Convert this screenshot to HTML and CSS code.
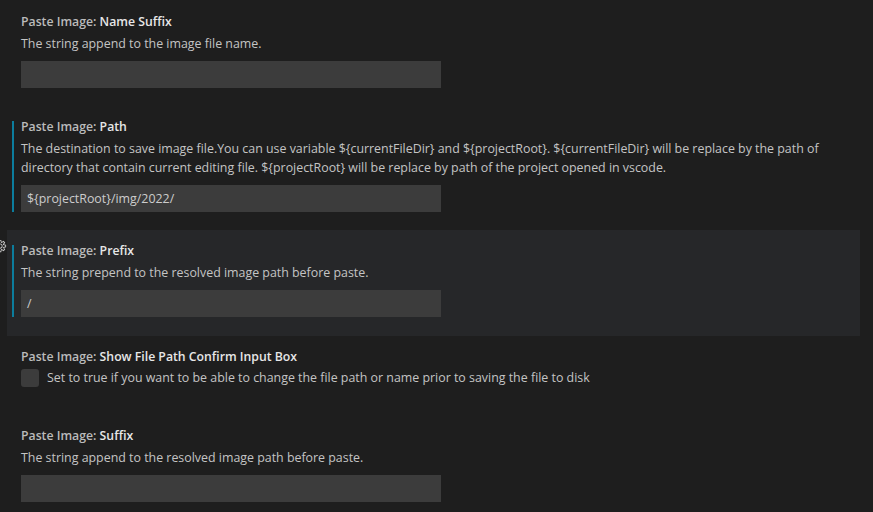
FILE: index.html
```html
<!DOCTYPE html>
<html lang="en">
<head>
<meta charset="utf-8">
<title>Settings</title>
<link rel="stylesheet" href="styles.css">
</head>
<body>
<div class="settings">
  <div class="item">
    <div class="contents">
      <div class="title"><span class="category">Paste Image: </span><span class="label">Name Suffix</span></div>
      <div class="desc">The string append to the image file name.</div>
      <div class="input"></div>
    </div>
  </div>
  <div class="item modified">
    <div class="contents">
      <div class="title"><span class="category">Paste Image: </span><span class="label">Path</span></div>
      <div class="desc">The destination to save image file.You can use variable ${currentFileDir} and ${projectRoot}. ${currentFileDir} will be replace by the path of directory that contain current editing file. ${projectRoot} will be replace by path of the project opened in vscode.</div>
      <div class="input">${projectRoot}/img/2022/</div>
    </div>
  </div>
  <div class="item modified hovered">
    <svg class="gear" viewBox="0 0 16 16" width="14" height="14"><path fill="#c5c5c5" fill-rule="evenodd" d="M9.1 4.4 8.6 2H7.4l-.5 2.4-.7.3-2-1.3-.9.8 1.3 2-.2.7-2.4.5v1.2l2.4.5.3.8-1.3 2 .8.8 2-1.3.8.3.4 2.3h1.2l.5-2.4.8-.3 2 1.3.8-.8-1.3-2 .3-.8 2.3-.4V7.4l-2.4-.5-.3-.8 1.3-2-.8-.8-2 1.3-.7-.2zM9.4 1l.5 2.4L12 2.1l2 2-1.4 2.1 2.4.4v2.8l-2.4.5L14 12l-2 2-2.1-1.4-.5 2.4H6.6l-.5-2.4L4 13.9l-2-2 1.4-2.1L1 9.4V6.6l2.4-.5L2.1 4l2-2 2.1 1.4.4-2.4h2.8zM10 8a2 2 0 1 1-4 0 2 2 0 0 1 4 0zM8 11a3 3 0 1 0 0-6 3 3 0 0 0 0 6z"/></svg>
    <div class="contents">
      <div class="title"><span class="category">Paste Image: </span><span class="label">Prefix</span></div>
      <div class="desc">The string prepend to the resolved image path before paste.</div>
      <div class="input">/</div>
    </div>
  </div>
  <div class="item bool">
    <div class="contents">
      <div class="title"><span class="category">Paste Image: </span><span class="label">Show File Path Confirm Input Box</span></div>
      <div class="check-row">
        <span class="checkbox"></span>
        <span class="desc-inline">Set to true if you want to be able to change the file path or name prior to saving the file to disk</span>
      </div>
    </div>
  </div>
  <div class="item">
    <div class="contents">
      <div class="title"><span class="category">Paste Image: </span><span class="label">Suffix</span></div>
      <div class="desc">The string append to the resolved image path before paste.</div>
      <div class="input"></div>
    </div>
  </div>
</div>
</body>
</html>
```
FILE: styles.css
```css
html, body {
  margin: 0;
  height: 100%;
  background: #1e1e1e;
  overflow: hidden;
}
body {
  font-family: "Open Sans", "Noto Sans", sans-serif;
  font-size: 12.4px;
  color: #c4c4c4;
}
.settings {
  padding: 1px 13px 0 7px;
}
.item {
  position: relative;
  padding: 15px 0 18px 5px;
}
.item.hovered {
  background: #262729;
  padding-bottom: 19px;
}
.item.bool {
  padding-bottom: 28px;
}
.contents {
  border-left: 2px solid transparent;
  padding-left: 7px;
  padding-right: 12px;
}
.item.modified .contents {
  border-left-color: #0c7d9d;
}
.title {
  font-size: 12.25px;
  line-height: 11px;
  font-weight: 600;
  white-space: nowrap;
}
.category {
  color: #bbbbbb;
}
.label {
  color: #e7e7e7;
}
.desc {
  margin-top: 7px;
  line-height: 19px;
  color: #c4c4c4;
}
.input {
  margin-top: 8px;
  width: 414px;
  height: 27px;
  line-height: 27px;
  padding: 0 0 0 6px;
  background: #3c3c3c;
  color: #cccccc;
}
.check-row {
  margin-top: 7px;
  display: flex;
  align-items: center;
  gap: 8px;
}
.checkbox {
  width: 18px;
  height: 18px;
  border-radius: 3px;
  background: #3c3c3c;
  flex: none;
}
.desc-inline {
  line-height: 18px;
  color: #c4c4c4;
}
.gear {
  position: absolute;
  left: -14px;
  top: 9px;
}
```
